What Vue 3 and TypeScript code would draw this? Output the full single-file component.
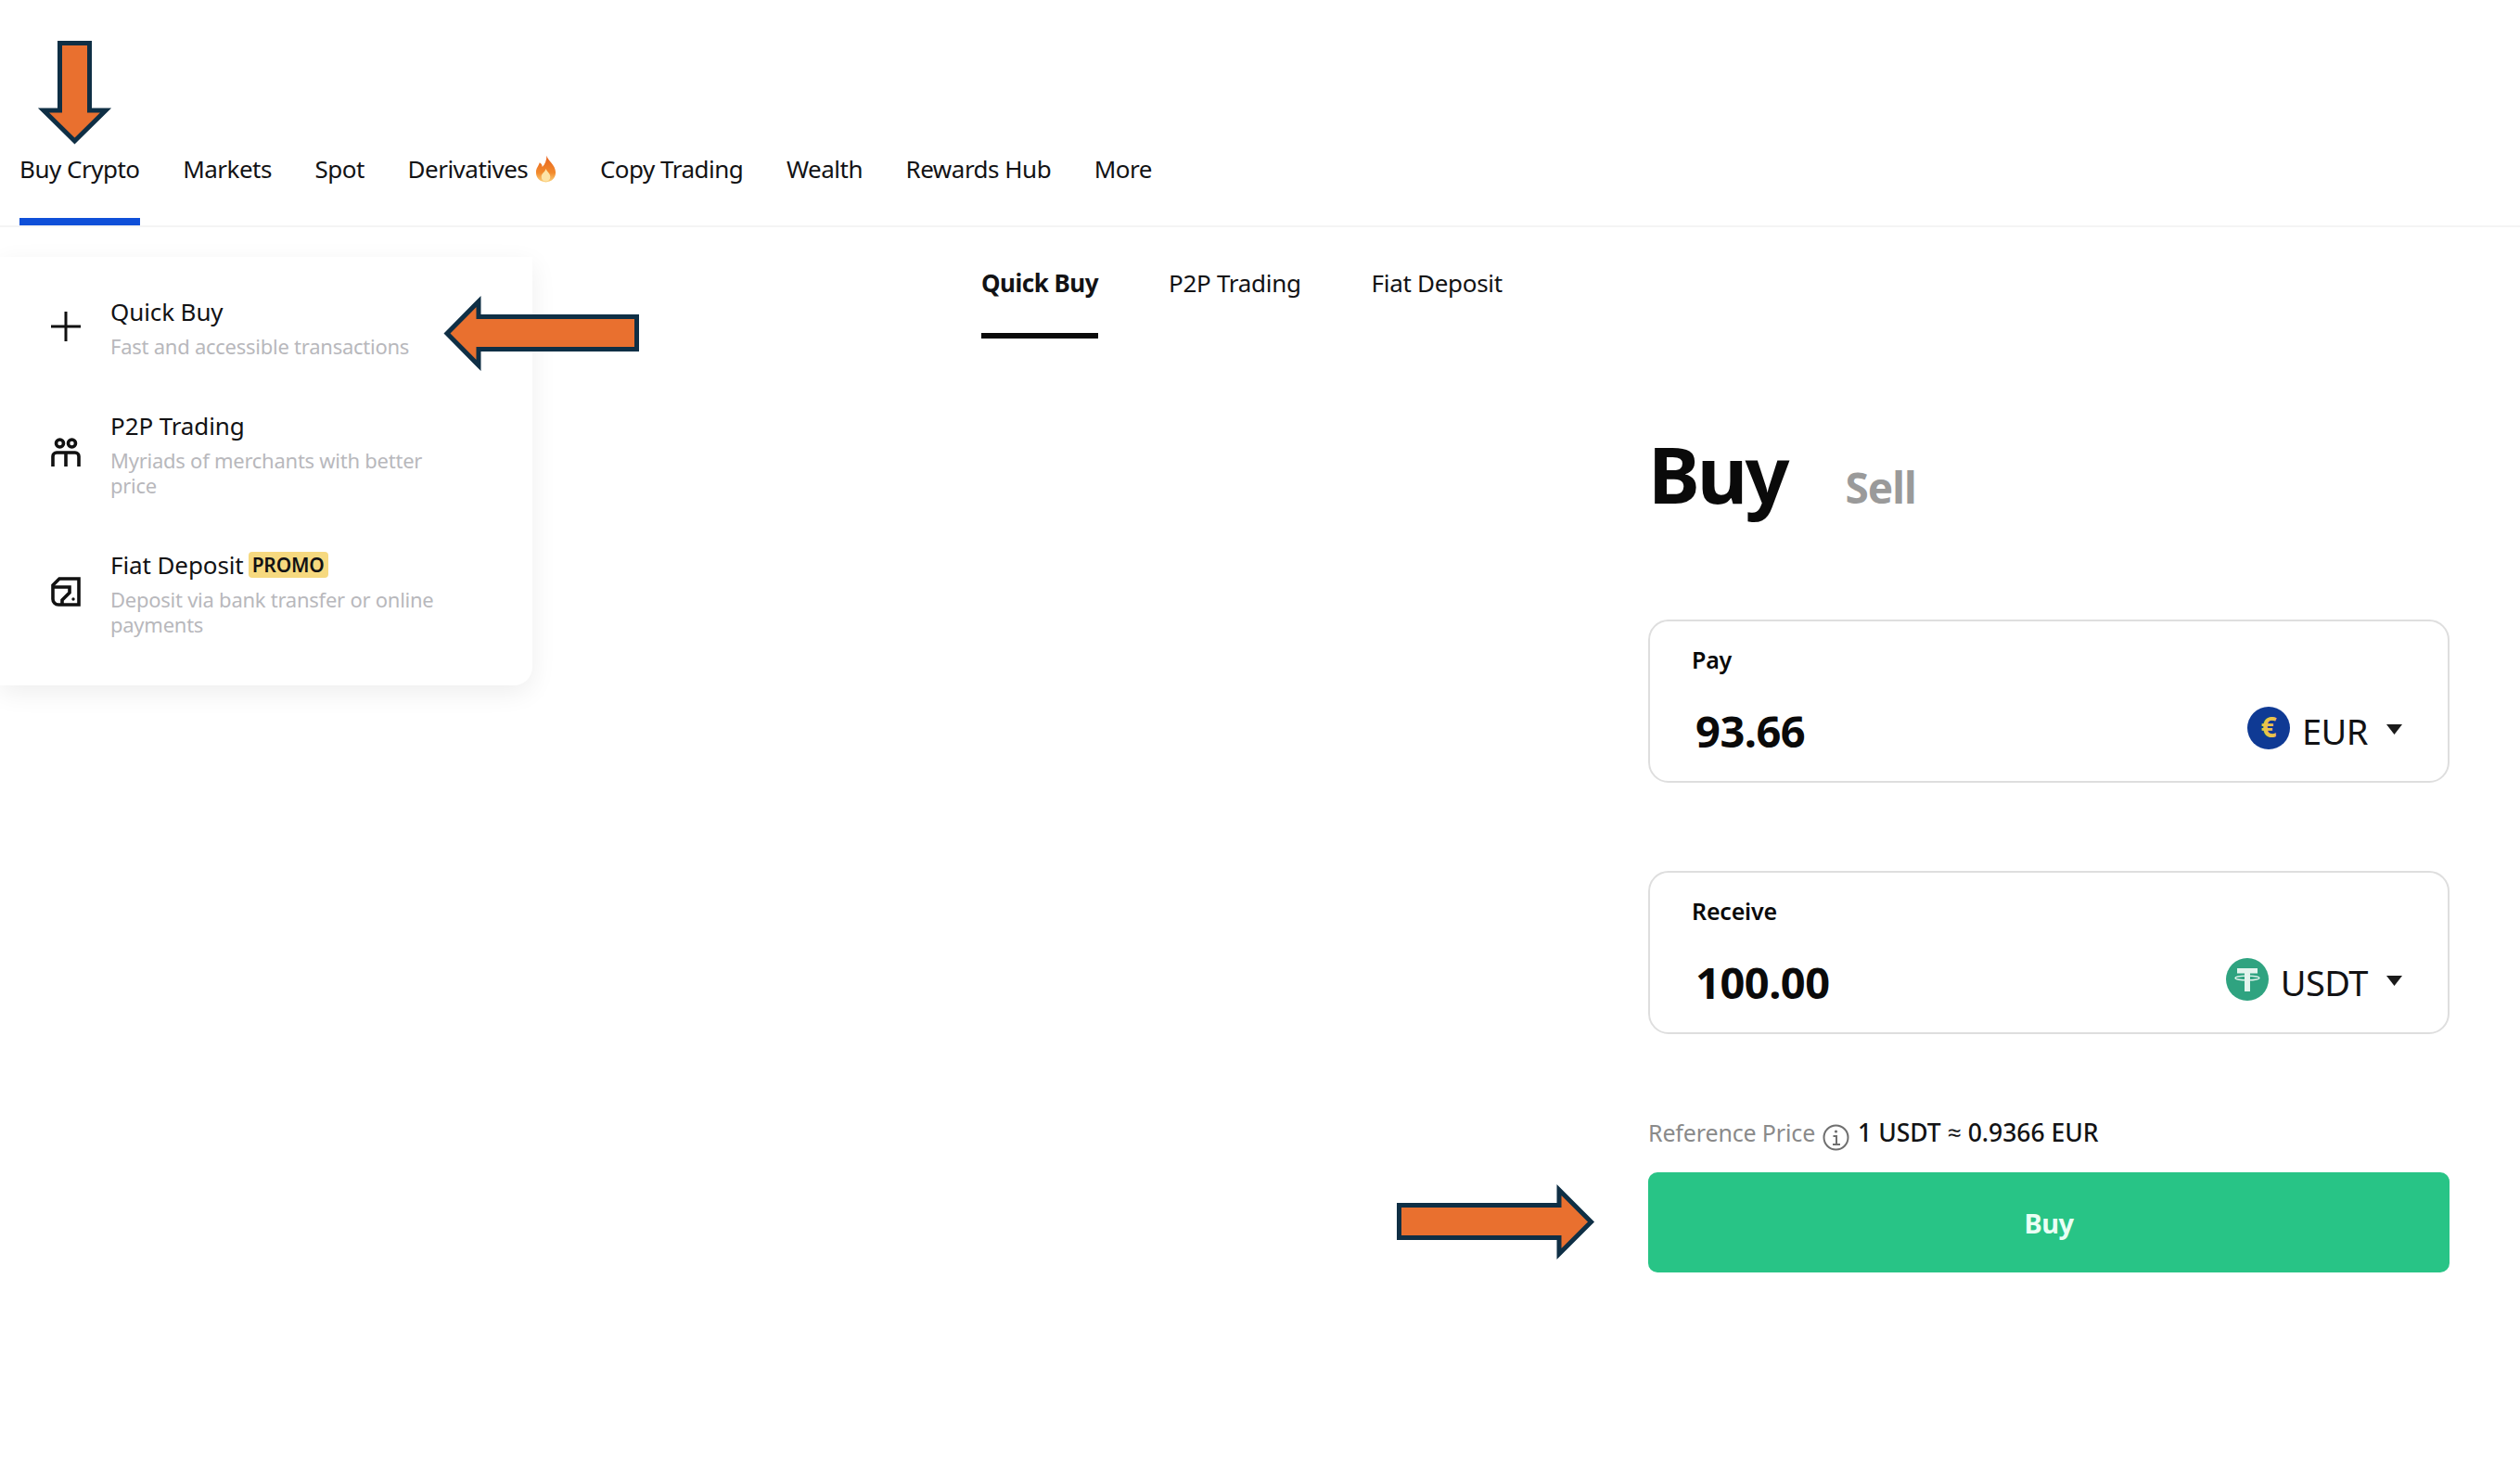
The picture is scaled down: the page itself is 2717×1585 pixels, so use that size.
<script setup lang="ts">
const navItems = ['Buy Crypto', 'Markets', 'Spot', 'Derivatives', 'Copy Trading', 'Wealth', 'Rewards Hub', 'More']
const tabs = ['Quick Buy', 'P2P Trading', 'Fiat Deposit']
</script>

<template>
  <div class="page">
    <header class="header">
      <nav class="nav">
        <a v-for="(item, i) in navItems" :key="item" class="nav-item" :class="{ active: i === 0 }">
          {{ item }}
          <svg v-if="item === 'Derivatives'" class="flame" viewBox="0 0 24 30">
            <defs>
              <linearGradient id="flameGrad" x1="0" y1="0" x2="0" y2="1">
                <stop offset="0" stop-color="#e8621f" />
                <stop offset="0.65" stop-color="#f28a2c" />
                <stop offset="1" stop-color="#fbd07a" />
              </linearGradient>
            </defs>
            <path d="M13 0c1 6 10 10 10 19 0 7-5 11-11 11S1 26 1 19c0-5 3-7 4-11 2 1 3 3 3 5 3-3 5-8 5-13z" fill="url(#flameGrad)" />
            <path d="M12 15c1 3 5 5 5 9 0 3-2 5-5 5s-5-2-5-5c0-4 4-5 5-9z" fill="#fde3a6" />
          </svg>
        </a>
      </nav>
    </header>

    <div class="menu">
      <div class="menu-item">
        <svg class="menu-icon" viewBox="0 0 32 32" fill="none" stroke="#111" stroke-width="3">
          <path d="M0 16H32M16 0V32" />
        </svg>
        <div class="menu-text">
          <div class="menu-title">Quick Buy</div>
          <div class="menu-sub">Fast and accessible transactions</div>
        </div>
      </div>
      <div class="menu-item">
        <svg class="menu-icon" viewBox="0 0 32 32" fill="none" stroke="#111" stroke-width="3.6">
          <circle cx="9.5" cy="6" r="4" />
          <circle cx="22.5" cy="6" r="4" />
          <path d="M2 31V20a4 4 0 0 1 4-4H26a4 4 0 0 1 4 4V31M16 16V31" />
        </svg>
        <div class="menu-text">
          <div class="menu-title">P2P Trading</div>
          <div class="menu-sub">Myriads of merchants with better price</div>
        </div>
      </div>
      <div class="menu-item">
        <svg class="menu-icon" viewBox="0 0 32 32" fill="none" stroke="#111" stroke-width="3.6">
          <path d="M9 2H30V30H8a6 6 0 0 1-6-6V9z" />
          <path d="M3 11H20V17L12 25V30" />
          <circle cx="24" cy="24" r="1.7" fill="#111" stroke="none" />
        </svg>
        <div class="menu-text">
          <div class="menu-title">Fiat Deposit<span class="promo">PROMO</span></div>
          <div class="menu-sub">Deposit via bank transfer or online payments</div>
        </div>
      </div>
    </div>

    <main class="main">
      <div class="tabs">
        <a v-for="(tab, i) in tabs" :key="tab" class="tab" :class="{ active: i === 0 }">{{ tab }}</a>
      </div>

      <section class="form">
        <div class="heading">
          <h1 class="buy-title">Buy</h1>
          <span class="sell-title">Sell</span>
        </div>

        <div class="card">
          <div class="card-label">Pay</div>
          <div class="card-row">
            <span class="amount">93.66</span>
            <div class="currency">
              <svg class="coin" viewBox="0 0 46 46">
                <circle cx="23" cy="23" r="23" fill="#0f3a94" />
                <text x="23" y="33" text-anchor="middle" font-size="30" font-weight="700" font-family="'Noto Sans', sans-serif" fill="#e9c44a">€</text>
              </svg>
              <span class="code">EUR</span>
              <svg class="caret" viewBox="0 0 17 11"><path d="M0 0H17L8.5 11z" fill="#1a1a1a" /></svg>
            </div>
          </div>
        </div>

        <div class="card second">
          <div class="card-label">Receive</div>
          <div class="card-row">
            <span class="amount">100.00</span>
            <div class="currency">
              <svg class="coin" viewBox="0 0 46 46">
                <circle cx="23" cy="23" r="23" fill="#2fa380" />
                <path d="M12 11H34V16.5H26V36H20V16.5H12z" fill="#e4f4ee" />
                <ellipse cx="23" cy="21.5" rx="13" ry="2.4" fill="none" stroke="#e4f4ee" stroke-width="1.4" />
              </svg>
              <span class="code">USDT</span>
              <svg class="caret" viewBox="0 0 17 11"><path d="M0 0H17L8.5 11z" fill="#1a1a1a" /></svg>
            </div>
          </div>
        </div>

        <div class="ref-row">
          <span class="ref-label">Reference Price</span>
          <svg class="info" viewBox="0 0 29 29" fill="none" stroke="#6f6f6f" stroke-width="2">
            <circle cx="14.5" cy="14.5" r="13" />
            <path d="M11.5 13H15V22M11 22H19" />
            <circle cx="14.5" cy="8" r="1.6" fill="#6f6f6f" stroke="none" />
          </svg>
          <span class="ref-value">1 USDT ≈ 0.9366 EUR</span>
        </div>

        <button class="buy-btn" type="button">Buy</button>
      </section>
    </main>

    <svg class="arrow arrow-down" viewBox="0 0 77 112">
      <polygon points="22.5,2.5 54.5,2.5 54.5,75 72,75 38.5,108 5,75 22.5,75" />
    </svg>
    <svg class="arrow arrow-left" viewBox="0 0 211 81">
      <polygon points="4,40.5 38,6 38,22.5 208.5,22.5 208.5,57.5 38,57.5 38,75" />
    </svg>
    <svg class="arrow arrow-right" viewBox="0 0 213 81">
      <polygon points="2.5,22.5 175,22.5 175,6 209.5,40.5 175,75 175,57.5 2.5,57.5" />
    </svg>
  </div>
</template>

<style>
html, body { margin: 0; background: #fff; }
</style>

<style scoped>
.page {
  position: relative;
  width: 2717px;
  height: 1585px;
  overflow: hidden;
  background: #fff;
  color: #121214;
  font-family: "Noto Sans", "Open Sans", sans-serif;
}

.header {
  box-sizing: border-box;
  height: 245px;
  display: flex;
  align-items: flex-end;
  padding-left: 21px;
  border-bottom: 2px solid #f4f4f4;
}
.nav { display: flex; gap: 46.6px; }
.nav-item {
  box-sizing: border-box;
  height: 120px;
  padding-top: 5px;
  border-bottom: 8px solid transparent;
  display: flex;
  align-items: center;
  gap: 8px;
  font-size: 26px;
  letter-spacing: -0.5px;
  white-space: nowrap;
}
.nav-item.active { border-bottom-color: #0f4fd8; }
.flame { width: 23px; height: 30px; }

.menu {
  position: absolute;
  left: 0;
  top: 277px;
  box-sizing: border-box;
  width: 574px;
  height: 462px;
  padding: 39px 0 0 55px;
  background: #fff;
  border-radius: 0 0 20px 0;
  box-shadow: 0 8px 28px rgba(0, 0, 0, 0.07);
}
.menu-item {
  display: flex;
  align-items: center;
  gap: 32px;
  margin-bottom: 52px;
}
.menu-icon { width: 32px; height: 32px; flex: none; }
.menu-text { width: 380px; }
.menu-title {
  font-size: 26px;
  line-height: 40px;
  letter-spacing: -0.1px;
}
.menu-sub {
  margin-top: 4px;
  font-size: 22px;
  line-height: 27px;
  letter-spacing: -0.25px;
  color: #b8b8bc;
}
.promo {
  display: inline-block;
  margin-left: 5px;
  padding: 0 4px;
  font-size: 21px;
  line-height: 28px;
  font-weight: 600;
  letter-spacing: -0.2px;
  background: #f6d97f;
  border-radius: 4px;
  vertical-align: 2px;
}

.main { display: flex; flex-direction: column; }
.tabs {
  display: flex;
  gap: 76px;
  padding-left: 1058px;
}
.tab {
  box-sizing: border-box;
  height: 120px;
  padding-top: 6px;
  border-bottom: 6px solid transparent;
  display: flex;
  align-items: center;
  font-size: 26px;
  letter-spacing: -0.3px;
}
.tab.active {
  font-weight: 700;
  letter-spacing: -0.5px;
  border-bottom-color: #0a0a0a;
}

.form {
  box-sizing: border-box;
  width: 864px;
  margin-left: 1777px;
  padding-top: 96px;
  display: flex;
  flex-direction: column;
}
.heading {
  display: flex;
  align-items: baseline;
  gap: 63px;
  margin-bottom: 107px;
}
.buy-title {
  margin: 0;
  font-size: 84px;
  line-height: 100px;
  font-weight: 700;
  letter-spacing: -3px;
  color: #0a0a0a;
}
.sell-title {
  font-size: 46px;
  font-weight: 700;
  letter-spacing: -1px;
  color: #9a9a9a;
}

.card {
  box-sizing: border-box;
  height: 176px;
  padding: 23px 49px 0 45px;
  border: 2px solid #dedede;
  border-radius: 22px;
}
.card.second { margin-top: 95px; }
.card-label {
  font-size: 25px;
  line-height: 36px;
  font-weight: 600;
  letter-spacing: -0.2px;
  color: #0a0a0a;
}
.card-row {
  display: flex;
  align-items: center;
  justify-content: space-between;
  margin-top: 31px;
  height: 56px;
}
.amount {
  margin-left: 4px;
  font-size: 47px;
  font-weight: 700;
  letter-spacing: -0.5px;
  color: #0a0a0a;
}
.currency { display: flex; align-items: center; }
.coin { width: 46px; height: 46px; margin-right: 13px; margin-bottom: 6px; }
.code {
  font-size: 38px;
  letter-spacing: -0.5px;
  margin-right: 20px;
}
.caret { width: 17px; height: 11px; margin-bottom: 4px; }

.ref-row {
  display: flex;
  align-items: center;
  margin-top: 88px;
  height: 36px;
  font-size: 25px;
  letter-spacing: -0.15px;
}
.ref-label { color: #8a8a8a; }
.info { width: 29px; height: 29px; margin: 10px 9px 0 8px; }
.ref-value { font-size: 26.5px; font-weight: 500; letter-spacing: 0; color: #121214; }

.buy-btn {
  margin-top: 25px;
  height: 108px;
  border: 0;
  border-radius: 10px;
  background: #28c486;
  color: #eafff5;
  font-family: inherit;
  font-size: 29px;
  font-weight: 700;
  letter-spacing: -0.5px;
}

.arrow { position: absolute; overflow: visible; }
.arrow polygon {
  fill: #e9702f;
  stroke: #0f2f45;
  stroke-width: 5;
  stroke-linejoin: miter;
}
.arrow-down { left: 42px; top: 44px; width: 77px; height: 112px; }
.arrow-left { left: 478px; top: 319px; width: 211px; height: 81px; }
.arrow-right { left: 1506px; top: 1277px; width: 213px; height: 81px; }
</style>
